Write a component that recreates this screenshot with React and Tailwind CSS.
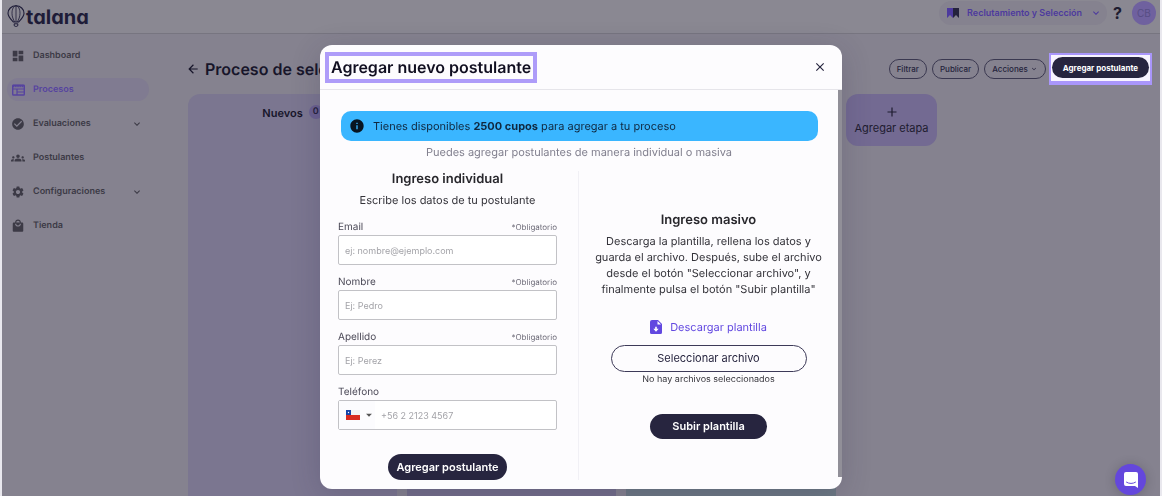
import { useState } from "react";
import {
  MdArrowBack,
  MdArrowDropDown,
  MdCheckCircle,
  MdClose,
  MdDashboard,
  MdExpandMore,
  MdGroups,
  MdInfo,
  MdLocalMall,
  MdSettings,
} from "react-icons/md";

function BoardIcon({ className }) {
  return (
    <svg viewBox="0 0 14 14" className={className} fill="none" stroke="currentColor" strokeWidth="1.400">
      <rect x="1.700" y="2.200" width="11.600" height="9.800" rx=".8" />
      <path d="M1.500 3h12" strokeWidth="2.400" strokeDasharray="1.500 .4" />
      <path d="M1.700 6h11.600M6 9h7M6 6v6" strokeWidth="1.200" />
    </svg>
  );
}

const menu = [
  { label: "Dashboard", Icon: MdDashboard },
  { label: "Procesos", Icon: BoardIcon, active: true },
  { label: "Evaluaciones", Icon: MdCheckCircle, more: true },
  { label: "Postulantes", Icon: MdGroups },
  { label: "Configuraciones", Icon: MdSettings, more: true },
  { label: "Tienda", Icon: MdLocalMall },
];

function Logo() {
  return (
    <a href="#" className="flex items-center text-[#1e1c38]" aria-label="talana">
      <svg viewBox="0 0 18 22" className="h-[22px] w-[18px]" fill="none" stroke="currentColor">
        <path d="M9 .8C4.400.8 1 4.200 1 8.300c0 3.600 2.800 6 5.400 8.700h5.200C14.200 14.300 17 11.900 17 8.300 17 4.200 13.600.8 9 .8z" strokeWidth="1.100" />
        <path d="M9 .8C6.600.8 5 4.200 5 8.300c0 3.600 1.300 6 2.600 8.700M9 .8c2.400 0 4 3.400 4 7.500 0 3.600-1.300 6-2.600 8.700M9 .8V17" strokeWidth=".8" />
        <path d="M7.200 18.800h3.600v1.400c0 .7-.5 1.200-1.200 1.200H8.400c-.7 0-1.200-.5-1.200-1.200z" strokeWidth="1" />
      </svg>
      <span className="ml-px pt-[3px] text-xl leading-6 font-bold [font-feature-settings:'cv11']">talana</span>
    </a>
  );
}

function Header() {
  return (
    <header className="flex h-[34px] items-start justify-between border-b border-[#777580] bg-[#8a8892] pr-1 pl-[5px]">
      <div className="pt-0.5">
        <Logo />
      </div>
      <div className="flex items-center pt-px">
        <button className="flex h-6 items-center rounded-full bg-[#85828f] pr-[5px] pl-2 text-[9px] font-semibold text-[#4d3a9e]">
          <svg viewBox="0 0 12 12" className="mr-2 size-3">
            <path d="M0 1h6v10L3 8 0 11z" fill="#4d3a9e" />
            <path d="M6 1h6v10L9 8 6 11z" fill="#24223c" />
          </svg>
          Reclutamiento y Selección
          <MdExpandMore className="ml-2 size-3" />
        </button>
        <button className="px-1.5 text-base leading-6 font-bold text-[#1e1c30]">?</button>
        <button className="ml-1 size-6 rounded-full bg-[#6f619f] text-[10px] text-[#574d84]">CB</button>
      </div>
    </header>
  );
}

function Sidebar() {
  return (
    <nav className="flex w-[147px] shrink-0 flex-col gap-[11px] pt-[10px] pl-[5px]">
      {menu.map(({ label, Icon, active, more }) => (
        <a
          key={label}
          href="#"
          className={`flex h-[23px] items-center rounded-full pr-1.5 pl-1 text-[9px] font-semibold ${
            active ? "bg-[#807b91] text-[#5643a0]" : "text-[#3c3a46]"
          }`}
        >
          <Icon className="size-3.5" />
          <span className="ml-2 flex-1">{label}</span>
          {more && <MdExpandMore className="size-3" />}
        </a>
      ))}
    </nav>
  );
}

function Board({ onAdd }) {
  return (
    <main className="flex min-w-0 flex-1 flex-col pl-[39px]">
      <div className="flex h-[60px] items-center justify-between pt-[10px] pr-2">
        <h1 className="flex items-center gap-[5px] text-base font-semibold whitespace-nowrap text-[#17152a]">
          <MdArrowBack className="-ml-0.5 size-3.5" />
          Proceso de selección
        </h1>
        <div className="flex items-center gap-[5px] text-[8px] font-medium text-[#24223c]">
          <button className="h-5 rounded-full border border-[#3a3850] px-[7px]">Filtrar</button>
          <button className="h-5 rounded-full border border-[#3a3850] px-[7px]">Publicar</button>
          <button className="flex h-5 items-center gap-0.5 rounded-full border border-[#3a3850] px-[7px]">
            Acciones
            <MdExpandMore className="size-2" />
          </button>
          <div className="-ml-0.5 border-2 border-b-4 border-[#a996fb] bg-[#f7f4ff] px-px pt-0.5 pb-[3px]">
            <button onClick={onAdd} className="block h-[21px] rounded-full bg-[#27253f] px-[11px] text-[8px] font-bold text-white">
              Agregar postulante
            </button>
          </div>
        </div>
      </div>
      <div className="flex flex-1 gap-[10px]">
        <section className="flex w-[209px] items-start justify-center gap-1.5 rounded-t-xl bg-[#7b7690] pt-[11px]">
          <h2 className="text-[11px] leading-4 font-semibold text-[#17152a]">Nuevos</h2>
          <span className="rounded-full bg-[#6a6090] px-1 text-[9px] leading-[14px] font-semibold text-[#24223c]">0</span>
        </section>
        <section className="w-[209px] rounded-t-xl bg-[#736e8a]" />
        <section className="w-[210px] rounded-t-xl bg-[#6c7883]" />
        <button className="flex h-[52px] w-[91px] flex-col items-center rounded-xl bg-[#736a92] pt-[13px] text-[11px] leading-4 text-[#1e1c30]">
          <svg viewBox="0 0 10 10" className="mb-[3px] size-[10px] shrink-0" stroke="currentColor" strokeWidth="1.200">
            <path d="M5 .5v9M.5 5h9" />
          </svg>
          Agregar etapa
        </button>
      </div>
    </main>
  );
}

function Field({ id, label, placeholder, type = "text" }) {
  return (
    <div className="mb-[9px]">
      <div className="flex h-4 items-center justify-between">
        <label htmlFor={id} className="text-[10px] text-[#4b4957]">
          {label}
        </label>
        <span className="text-[8px] text-[#6f6d7a]">*Obligatorio</span>
      </div>
      <input
        id={id}
        type={type}
        placeholder={placeholder}
        className="block h-[30px] w-full rounded-xs border border-[#c2c2c6] bg-white px-1.5 text-[9px] placeholder:text-[#a3a3a8]"
      />
    </div>
  );
}

function ManualEntry() {
  return (
    <form onSubmit={(e) => e.preventDefault()} className="w-[219px]">
      <h3 className="text-center text-[13px] leading-4 font-semibold text-[#28272c]">Ingreso individual</h3>
      <p className="mt-[5px] mb-[11px] text-center text-[11px] leading-4 text-[#34333a]">Escribe los datos de tu postulante</p>
      <Field id="email" label="Email" type="email" placeholder="ej: nombre@ejemplo.com" />
      <Field id="nombre" label="Nombre" placeholder="Ej: Pedro" />
      <Field id="apellido" label="Apellido" placeholder="Ej: Perez" />
      <label htmlFor="telefono" className="flex h-4 items-center text-[10px] text-[#4b4957]">
        Teléfono
      </label>
      <div className="flex h-[30px] items-center rounded-xs border border-[#c2c2c6] bg-white">
        <button type="button" aria-label="Chile +56" className="flex h-full w-9 items-center gap-0.5 bg-[#fcfcfe] pl-[7px]">
          <svg viewBox="0 0 14 10" className="h-2.5 w-3.5 shrink-0">
            <path d="M0 0h14v5H0z" fill="#f2f2f4" />
            <path d="M0 5h14v5H0z" fill="#d82b20" />
            <path d="M0 0h5v5H0z" fill="#1544a8" />
            <circle cx="2.500" cy="2.500" r=".7" fill="#fff" />
          </svg>
          <MdArrowDropDown className="size-3.5 shrink-0 text-[#555]" />
        </button>
        <input
          id="telefono"
          type="tel"
          placeholder="+56 2 2123 4567"
          className="h-full min-w-0 flex-1 pl-1.5 text-[9px] placeholder:text-[#a3a3a8]"
        />
      </div>
      <button className="mx-auto mt-6 block h-[26px] rounded-full bg-[#27253f] px-2 text-[11px] font-semibold text-white">
        Agregar postulante
      </button>
    </form>
  );
}

function BulkEntry() {
  return (
    <div className="flex flex-1 flex-col items-center justify-center border-l border-[#f1f0f5] px-4 text-center">
      <h3 className="text-[13px] leading-4 font-semibold text-[#28272c]">Ingreso masivo</h3>
      <p className="mt-[5px] text-[11px] leading-4 text-[#34333a]">
        Descarga la plantilla, rellena los datos y guarda el archivo. Después, sube el archivo desde el botón
        "Seleccionar archivo", y finalmente pulsa el botón "Subir plantilla"
      </p>
      <a href="#" className="mt-5 flex h-5 items-center gap-2 text-[11px] text-[#6248e0]">
        <svg viewBox="0 0 12 14" className="h-3.5 w-3">
          <path d="M2 0h6l4 4v8.500a1.500 1.500 0 0 1-1.500 1.500h-9A1.500 1.500 0 0 1 0 12.500V2a2 2 0 0 1 2-2z" fill="currentColor" />
          <path d="M7.500 1v3.500H11z" fill="#fff" />
          <path d="M5.200 6.800h1.600v2h1.900L6 11.700 3.300 8.800h1.900z" fill="#fff" />
        </svg>
        Descargar plantilla
      </a>
      <button className="mt-2 h-[27px] w-[196px] rounded-full border border-[#3d3a58] text-[11px] text-[#27253f]">
        Seleccionar archivo
      </button>
      <p className="text-[9px] leading-4 text-[#34333a]">No hay archivos seleccionados</p>
      <button className="mt-[26px] h-[25px] rounded-full bg-[#27253f] px-[22px] text-[11px] font-semibold text-white">
        Subir plantilla
      </button>
    </div>
  );
}

function ApplicantModal({ onClose }) {
  return (
    <div className="fixed inset-0 flex items-start justify-center pt-[45px]">
      <div
        role="dialog"
        aria-labelledby="modal-title"
        className="w-full max-w-[522px] overflow-hidden rounded-xl bg-[#fdfcfe] shadow-[0_6px_30px_rgba(40,35,70,0.2)]"
      >
        <div className="flex h-[45px] items-center justify-between border-b border-[#e6e5ea] pr-[15px] pl-[5px]">
          <h2 id="modal-title" className="border-4 border-[#ae9cf9] px-0.5 text-base leading-[23px] font-semibold text-[#100e20]">
            Agregar nuevo postulante
          </h2>
          <button onClick={onClose} aria-label="Cerrar">
            <MdClose className="size-3.5 text-[#27253f]" />
          </button>
        </div>
        <div className="flex">
          <div className="flex-1 pt-[21px] pb-[9px]">
            <p className="mr-5 ml-[21px] flex h-[30px] items-center gap-2 rounded-[10px] bg-[#3ab6ff] pl-2 text-[11px] text-[#10283f]">
              <MdInfo className="size-4 text-[#071521]" />
              <span>
                Tienes disponibles <b className="font-bold">2500 cupos</b> para agregar a tu proceso
              </span>
            </p>
            <p className="mt-[3px] text-center text-[11px] leading-4 text-[#82808f]">
              Puedes agregar postulantes de manera individual o masiva
            </p>
            <div className="mt-[11px] flex gap-[21px] pl-[18px]">
              <ManualEntry />
              <BulkEntry />
            </div>
          </div>
          <div className="mb-3 w-1 bg-[#918f98]" />
        </div>
      </div>
    </div>
  );
}

export default function App() {
  const [open, setOpen] = useState(true);

  return (
    <div className="bg-[#e9e8ee] px-0.5 font-['Inter',sans-serif] [text-rendering:geometricPrecision]">
      <div className="flex min-h-screen flex-col bg-[#85828f]">
        <Header />
        <div className="flex flex-1">
          <Sidebar />
          <Board onAdd={() => setOpen(true)} />
        </div>
      </div>
      {open && <ApplicantModal onClose={() => setOpen(false)} />}
      <button
        aria-label="Abrir chat"
        className="fixed right-4 bottom-px flex size-[31px] items-center justify-center rounded-full bg-[#6447dc] shadow-[0_1px_12px_rgba(0,0,0,0.2)]"
      >
        <svg viewBox="0 0 14 16" className="h-4 w-3.5">
          <path d="M2 0h10a2 2 0 0 1 2 2v14l-3-2H2a2 2 0 0 1-2-2V2a2 2 0 0 1 2-2z" fill="#fff" />
          <path d="M2.500 10.200c2.500 1.700 6.500 1.700 9 0" fill="none" stroke="#6447dc" strokeLinecap="round" />
        </svg>
      </button>
    </div>
  );
}
